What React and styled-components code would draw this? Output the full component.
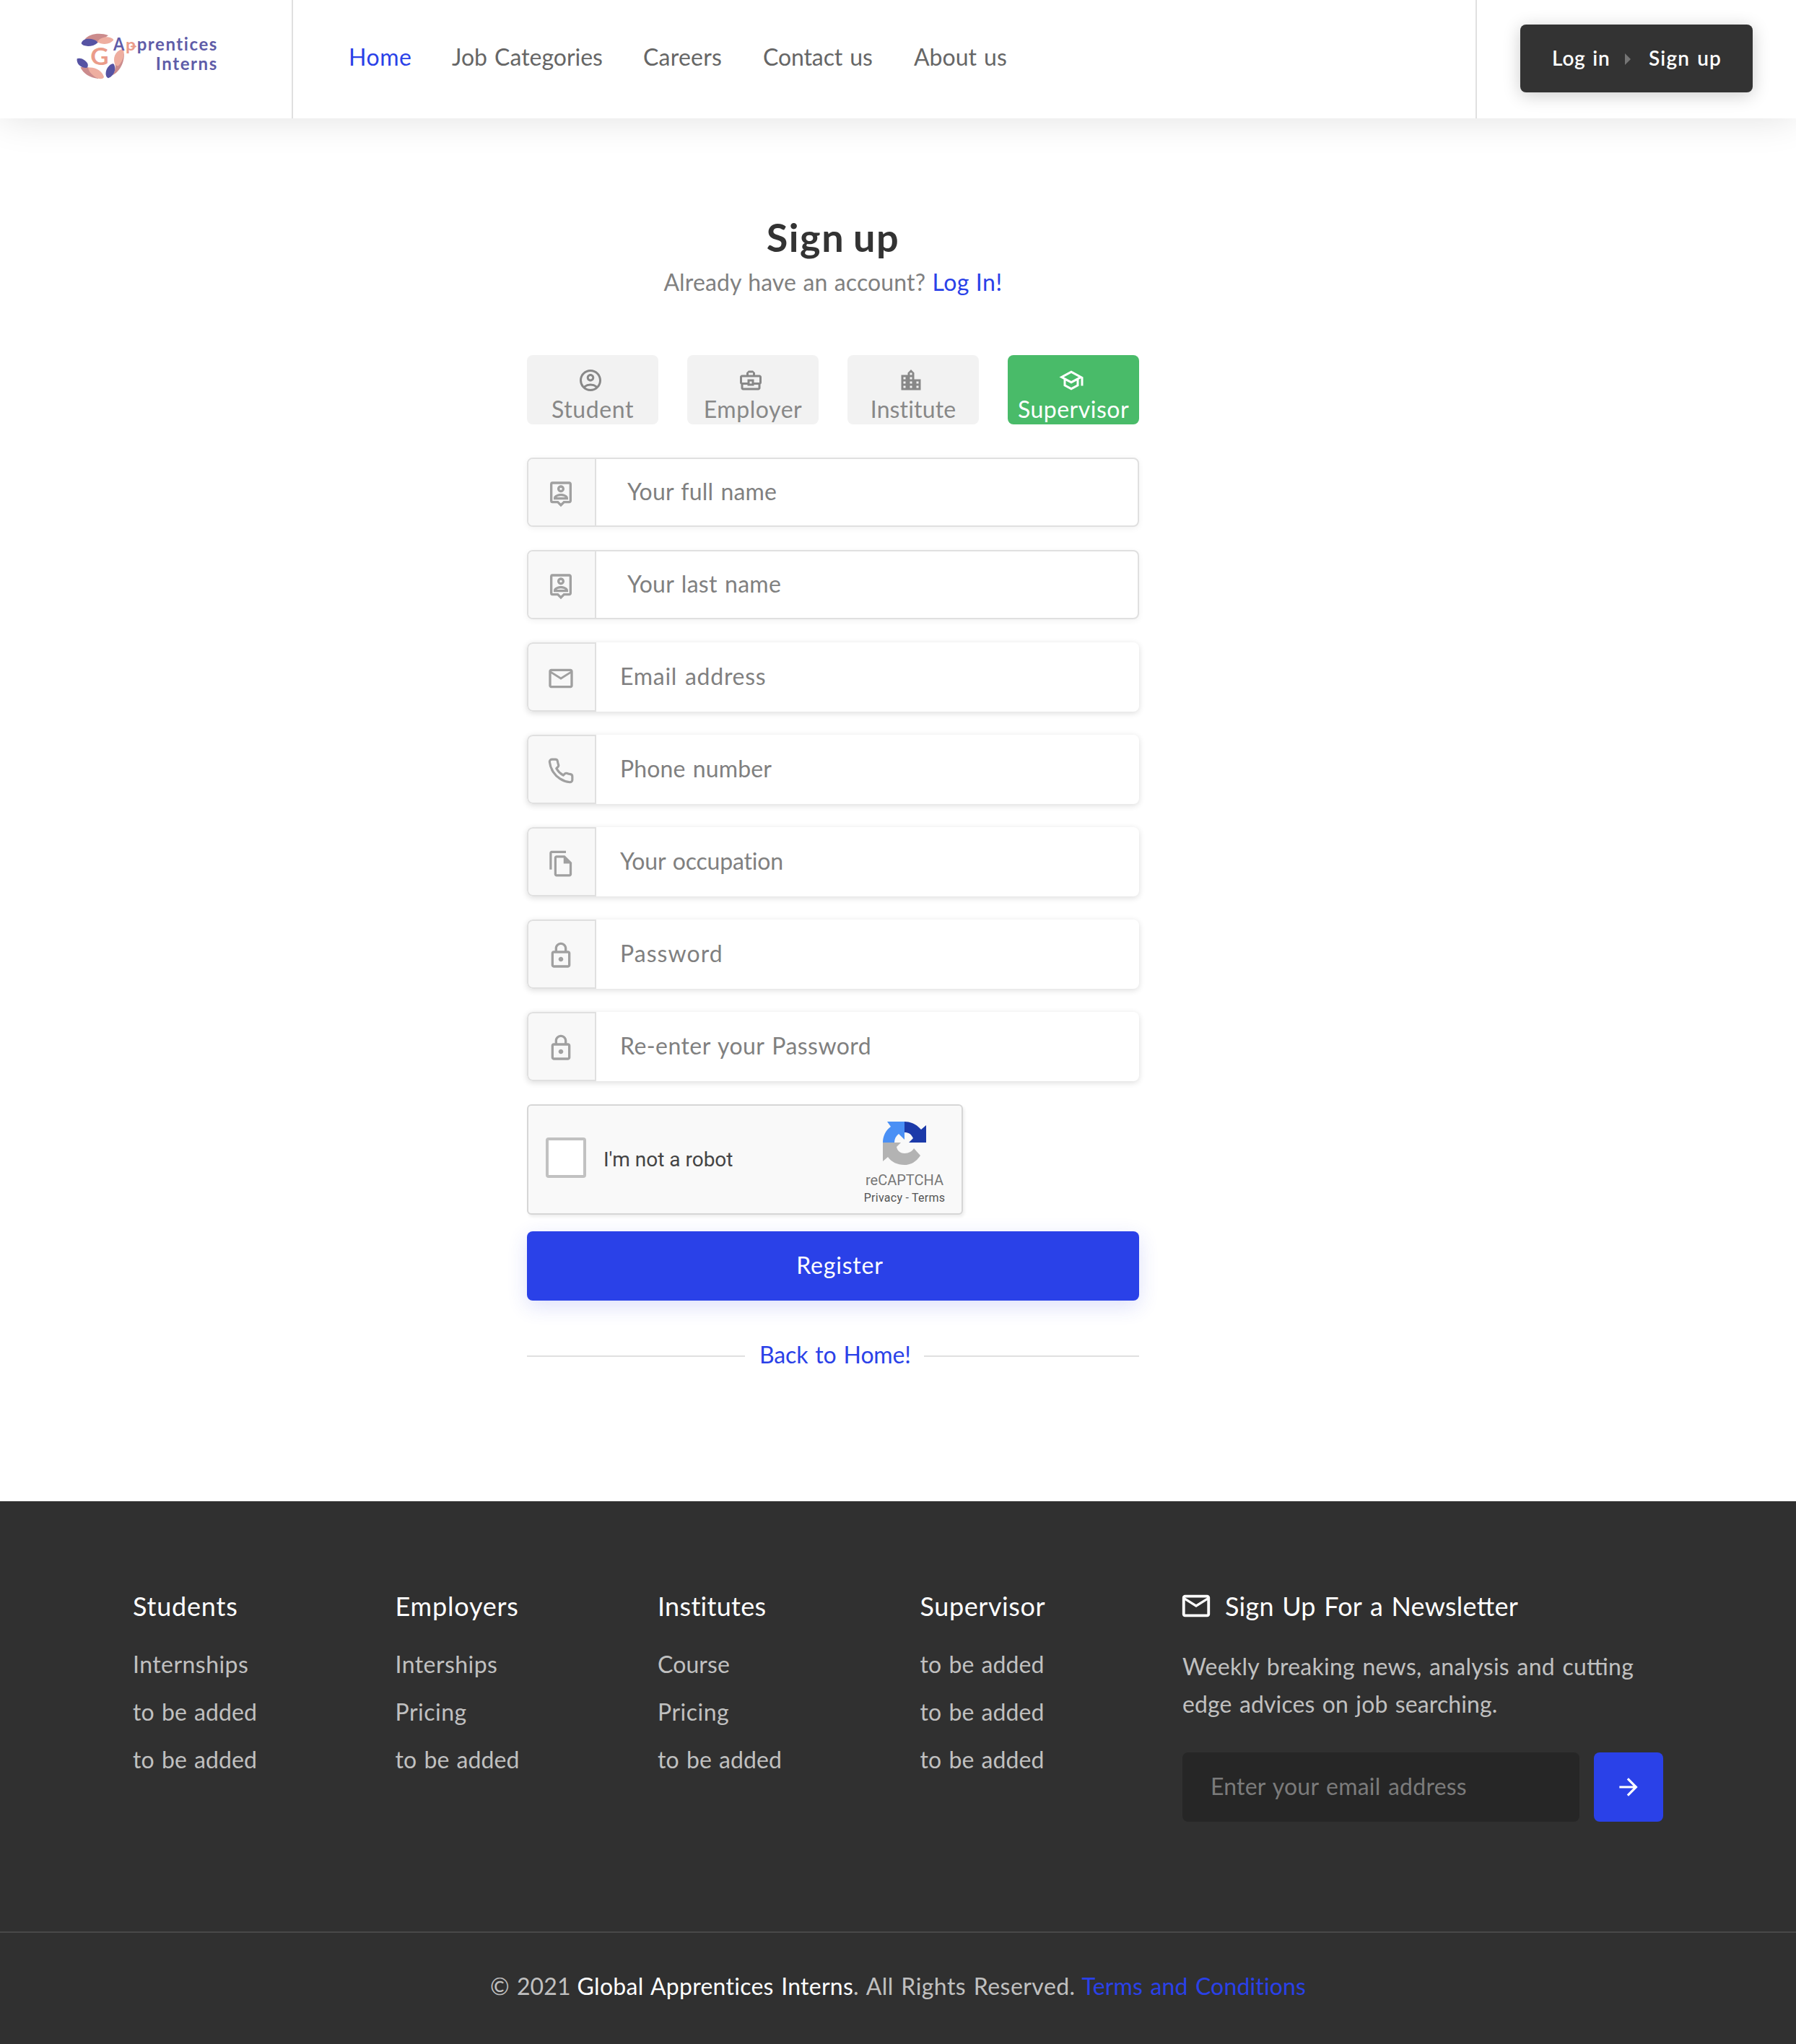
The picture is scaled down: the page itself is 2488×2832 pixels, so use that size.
import React from "react";
import styled, { createGlobalStyle } from "styled-components";
import {
  MdOutlineAccountCircle,
  MdOutlineBusinessCenter,
  MdLocationCity,
  MdOutlineSchool,
  MdOutlinePersonPin,
  MdOutlineEmail,
  MdOutlineLock,
  MdArrowForward,
} from "react-icons/md";
import { FiPhone } from "react-icons/fi";

const blue = "#2a41e8";

const GlobalStyle = createGlobalStyle`
  *, *::before, *::after { box-sizing: border-box; }
  body {
    margin: 0;
    background: #fff;
    color: #808080;
    font: 400 32px/52px "Lato", sans-serif;
    word-spacing: 2px;
  }
  a { color: inherit; text-decoration: none; }
  svg { display: block; flex: none; }
`;

const Page = styled.div`
  width: 2488px;
  height: 2832px;
  display: flex;
  flex-direction: column;
`;

/* Inline run of text with its own tracking */
const Text = styled.span`
  letter-spacing: ${(p) => p.$ls || 0}px;
  word-spacing: ${(p) => p.$ws ?? 2}px;
  font-feature-settings: ${(p) => (p.$lig ? '"liga" 1' : '"liga" 0')};
  color: ${(p) => p.$color || "inherit"};
  white-space: pre;
`;

/* Header */
const Header = styled.header`
  display: flex;
  height: 164px;
  background: #fff;
  box-shadow: 0 0 50px rgba(0, 0, 0, 0.12);
`;

const LogoArea = styled.div`
  width: 406px;
  border-right: 2px solid #e0e0e0;
  padding: 30px 0 0 90px;
`;

const Nav = styled.nav`
  flex: 1;
  display: flex;
  align-items: center;
  padding: 0 0 7px 76px;
`;

const NavLink = styled.a`
  width: ${(p) => p.$w}px;
  padding-left: ${(p) => p.$indent || 0}px;
  color: ${(p) => (p.$active ? blue : "#666")};
`;

const AuthArea = styled.div`
  width: 444px;
  border-left: 2px solid #e0e0e0;
  padding: 34px 0 0 60px;
`;

const AuthButton = styled.div`
  display: flex;
  align-items: center;
  width: 322px;
  height: 94px;
  padding: 0 0 3px 44px;
  border-radius: 8px;
  background: #333;
  color: #fff;
  font-size: 28px;
  font-weight: 600;
  box-shadow: 0 4px 24px rgba(0, 0, 0, 0.2);
`;

const AuthLink = styled.a`
  width: ${(p) => p.$w}px;
`;

const Caret = styled.span`
  margin: 4px 25px 0 0;
  border-left: 8px solid #757575;
  border-top: 8px solid transparent;
  border-bottom: 8px solid transparent;
`;

/* Sign-up form */
const Main = styled.main`
  flex: none;
  height: 1916px;
  padding: 133px 0 0 730px;
`;

const Form = styled.form`
  width: 848px;
  display: flex;
  flex-direction: column;
`;

const Title = styled.h1`
  margin: 0 0 4px;
  text-align: center;
  font-size: 54px;
  line-height: 64px;
  font-weight: 700;
  color: #333;
`;

const Subtitle = styled.p`
  margin: 0 0 75px;
  text-align: center;
`;

const RoleRow = styled.div`
  display: flex;
  gap: 40px;
  margin-bottom: 46px;
`;

const Role = styled.button`
  width: 182px;
  height: 96px;
  border: 0;
  padding: 17px 0 0;
  border-radius: 8px;
  display: flex;
  flex-direction: column;
  align-items: center;
  font: inherit;
  line-height: 44px;
  background: ${(p) => (p.$active ? "#49bb69" : "#f2f2f2")};
  color: ${(p) => (p.$active ? "#fff" : "#888")};
  svg { width: 36px; height: 36px; margin-right: 6px; }
`;

const Fields = styled.div`
  display: flex;
  flex-direction: column;
  gap: 32px;
`;

const Field = styled.label`
  display: flex;
  height: 96px;
  border-radius: 8px;
  background: #fff;
  overflow: hidden;
  border: ${(p) => (p.$outlined ? "2px solid #e0e0e0" : "0")};
  box-shadow: ${(p) =>
    p.$outlined ? "0 2px 8px rgba(0,0,0,0.06)" : "0 2px 8px rgba(0,0,0,0.14)"};
`;

const FieldIcon = styled.span`
  flex: none;
  width: ${(p) => (p.$outlined ? 94 : 96)}px;
  display: flex;
  align-items: center;
  justify-content: center;
  padding: 4px ${(p) => (p.$outlined ? 2 : 2)}px 0 0;
  background: #f8f8f8;
  color: #a0a0a0;
  border: 2px solid #e0e0e0;
  border-width: ${(p) => (p.$outlined ? "0 2px 0 0" : "2px")};
  border-radius: ${(p) => (p.$outlined ? "0" : "8px 0 0 8px")};
`;

const FieldInput = styled.input`
  flex: 1;
  min-width: 0;
  border: 0;
  outline: 0;
  background: transparent;
  padding: 0 0 3px ${(p) => p.$indent}px;
  font: inherit;
  word-spacing: 2px;
  letter-spacing: ${(p) => p.$ls}px;
  &::placeholder { color: ${(p) => p.$tint || "#808080"}; opacity: 1; }
`;

const Captcha = styled.div`
  width: 604px;
  height: 153px;
  margin: 32px 0 23px;
  display: flex;
  align-items: center;
  padding: 0 21px 0 24px;
  background: #f9f9f9;
  border: 2px solid #d6d6d6;
  border-radius: 6px;
  box-shadow: 2px 3px 4px rgba(0, 0, 0, 0.07);
  font-family: "Roboto", sans-serif;
  word-spacing: 0;
`;

const CheckBox = styled.span`
  width: 56px;
  height: 56px;
  margin: 0 24px 5px 0;
  border: 4px solid #c1c1c1;
  border-radius: 4px;
  background: #fff;
`;

const CaptchaLabel = styled.span`
  flex: 1;
  font-size: 28px;
  color: #444;
`;

const CaptchaBrand = styled.div`
  width: 116px;
  display: flex;
  flex-direction: column;
  align-items: center;
  padding-top: 13px;
`;

const BrandName = styled.span`
  margin-top: 8px;
  font-size: 20px;
  line-height: 24px;
  color: #777;
`;

const BrandLinks = styled.span`
  font-size: 16px;
  line-height: 26px;
  letter-spacing: 0.25px;
  color: #555;
`;

const Register = styled.button`
  height: 96px;
  border: 0;
  border-radius: 8px;
  padding: 0 0 3px 19px;
  background: ${blue};
  color: #fff;
  font: inherit;
  box-shadow: 0 8px 28px rgba(42, 65, 232, 0.16);
`;

const BackRow = styled.div`
  display: flex;
  align-items: center;
  height: 56px;
  margin-top: 49px;
`;

const Rule = styled.span`
  width: ${(p) => p.$w}px;
  height: 2px;
  background: #e0e0e0;
`;

const BackLink = styled.a`
  flex: 1;
  padding: 0 0 5px 20px;
  color: ${blue};
`;

/* Footer */
const Footer = styled.footer`
  flex: 1;
  display: flex;
  flex-direction: column;
  background: #303030;
  color: #c0c0c0;
`;

const FooterTop = styled.div`
  height: 596px;
  display: grid;
  grid-template-columns: repeat(4, 363.5px) 1fr;
  padding: 121px 184px 0 184px;
`;

const FooterTitle = styled.h3`
  display: flex;
  align-items: center;
  margin: 0 0 ${(p) => p.$gap || 24}px;
  height: 48px;
  font-size: 36px;
  line-height: 48px;
  font-weight: 400;
  color: #fff;
  svg { width: 46px; height: 46px; margin: 0 17px 1px -4px; }
`;

const FooterLink = styled.a`
  display: block;
  line-height: 66px;
`;

const Newsletter = styled.div`
`;

const Blurb = styled.p`
  margin: 0 0 41px;
  display: flex;
  flex-direction: column;
`;

const Subscribe = styled.div`
  display: flex;
  gap: 20px;
  height: 96px;
`;

const EmailBox = styled.label`
  width: 550px;
  display: flex;
  border-radius: 8px;
  background: #262626;
`;

const SendButton = styled.button`
  width: 96px;
  border: 0;
  border-radius: 8px;
  background: ${blue};
  color: #fff;
  display: flex;
  align-items: center;
  justify-content: center;
`;

const FooterBottom = styled.div`
  flex: 1;
  display: flex;
  align-items: center;
  justify-content: center;
  gap: 9px;
  padding-bottom: 6px;
  border-top: 2px solid #484848;
`;

const Logo = () => (
  <svg width="230" height="90" viewBox="0 0 690 270">
    <g fill="#cb8b8c">
      <path d="M82 74C100 50 145 44 180 57C162 68 152 88 134 88C118 92 108 78 82 74Z" />
      <path d="M64 190C92 184 118 196 128 212C136 222 140 230 138 237C104 234 76 216 64 190Z" />
      <path d="M206 164C225 160 240 146 245 130C249 170 226 210 197 223C212 202 211 180 206 164Z" />
    </g>
    <g fill="#eeaea0">
      <path d="M134 84C150 60 188 58 202 75C190 95 156 98 134 84Z" />
      <path d="M96 191C126 187 156 206 162 230C156 243 134 238 118 224C106 214 98 204 96 191Z" />
      <path d="M205 168C199 142 218 115 243 114C248 136 243 162 222 184C211 184 207 178 205 168Z" />
    </g>
    <g fill="#5653a3">
      <path d="M68 91C72 70 100 69 118 74C130 78 138 84 134 89C118 105 76 106 68 91Z" />
      <path d="M50 154C66 148 86 160 94 174C98 186 93 194 85 192C64 190 47 175 50 154Z" />
      <path d="M204 178C213 196 207 224 180 235C165 230 166 200 184 183C192 176 201 172 204 178Z" />
    </g>
    <g fontFamily="Lato, sans-serif" fontWeight="700" wordSpacing="0">
      <text x="106" y="179" fontSize="96" fill="#eb9c8a" textLength="76" lengthAdjust="spacingAndGlyphs">G</text>
      <g fill="#5f5ca8" fontSize="72" style={{ fontFeatureSettings: '"liga" 0' }}>
        <text x="201" y="121" textLength="46" lengthAdjust="spacingAndGlyphs">A</text>
        <text x="252" y="119" fontSize="66" fill="#eb9c8a" textLength="42" lengthAdjust="spacingAndGlyphs">p</text>
        <text x="299" y="121" textLength="332" lengthAdjust="spacing">prentices</text>
        <text x="377" y="202" textLength="254" lengthAdjust="spacing">Interns</text>
      </g>
      <path d="M276 103H293" stroke="#eb9c8a" strokeWidth="7" strokeLinecap="round" />
    </g>
  </svg>
);

const CopyIcon = () => (
  <svg width="39" height="39" viewBox="0 0 24 24" fill="currentColor">
    <path d="M16 1H4c-1.1 0-2 .9-2 2v14h2V3h12V1z" />
    <path
      fillRule="evenodd"
      d="M15 5l6 6v10c0 1.1-.9 2-2 2H7.99C6.89 23 6 22.1 6 21l.01-14c0-1.1.89-2 1.99-2h7zM8 7v14h11v-9h-5V7H8z"
    />
  </svg>
);

const CaptchaLogo = () => (
  <svg width="60" height="62" viewBox="0 0 60 62">
    <path fill="#4a90f5" d="M6 1H30V26L22 18C18 21 16 25 16 30H0C0 21 4 13 11 8Z" />
    <path fill="#1c3aa9" d="M30 1C40 1 48 6 53 12L60 6V30H36L42 24C39 18 36 16 30 16Z" />
    <path fill="#b3b3b3" d="M0 30H25L19 36C20 42 25 45 30 45C36 45 41 42 43 38L52 48C46 57 38 61 30 61C20 61 12 57 7 50L0 56Z" />
  </svg>
);

const navItems = [
  { label: "Home", ls: 0.53, w: 144, indent: 1, active: true },
  { label: "Job Categories", ls: -0.02, w: 265 },
  { label: "Careers", ls: 0.23, w: 166 },
  { label: "Contact us", ls: -0.11, w: 209 },
  { label: "About us", ls: -0.01, w: 150 },
];

const roles = [
  { label: "Student", ls: 0.6, Icon: MdOutlineAccountCircle },
  { label: "Employer", ls: 0.58, Icon: MdOutlineBusinessCenter },
  { label: "Institute", ls: 0.14, Icon: MdLocationCity },
  { label: "Supervisor", ls: 0.49, Icon: MdOutlineSchool, active: true },
];

const fields = [
  { label: "Your full name", ls: 0.15, indent: 43, outlined: true, icon: <MdOutlinePersonPin size={40} /> },
  { label: "Your last name", ls: 0.25, indent: 43, outlined: true, icon: <MdOutlinePersonPin size={40} /> },
  { label: "Email address", ls: 0.72, indent: 33, icon: <MdOutlineEmail size={40} /> },
  { label: "Phone number", ls: 0.12, indent: 33, icon: <FiPhone size={38} /> },
  { label: "Your occupation", ls: -0.18, indent: 33, icon: <CopyIcon /> },
  { label: "Password", ls: 1.05, indent: 33, type: "password", icon: <MdOutlineLock size={40} /> },
  { label: "Re-enter your Password", ls: 0.44, indent: 33, type: "password", icon: <MdOutlineLock size={40} /> },
];

const tba = ["to be added", 0.06];
const columns = [
  { title: "Students", ls: 0.8, links: [["Internships", 0.45], tba, tba] },
  { title: "Employers", ls: 0.8, links: [["Interships", 0.45], ["Pricing", 0.49], tba] },
  { title: "Institutes", ls: 0.3, links: [["Course", 0.11], ["Pricing", 0.49], tba] },
  { title: "Supervisor", ls: 0.58, links: [tba, tba, tba] },
];

export default function App() {
  return (
    <Page>
      <GlobalStyle />
      <Header>
        <LogoArea>
          <Logo />
        </LogoArea>
        <Nav>
          {navItems.map((n) => (
            <NavLink key={n.label} href="#" $w={n.w} $indent={n.indent} $active={n.active}>
              <Text $ls={n.ls}>{n.label}</Text>
            </NavLink>
          ))}
        </Nav>
        <AuthArea>
          <AuthButton>
            <AuthLink href="#" $w={101}>
              <Text $ls={0.79}>Log in</Text>
            </AuthLink>
            <Caret />
            <AuthLink href="#" $w={110}>
              <Text $ls={1.14}>Sign up</Text>
            </AuthLink>
          </AuthButton>
        </AuthArea>
      </Header>

      <Main>
        <Form>
          <Title>
            <Text $ls={1.6} $ws={-3}>Sign up</Text>
          </Title>
          <Subtitle>
            <Text $ls={0.13} $ws={1}>Already have an account? </Text>
            <Text as="a" href="#" $ls={0.55} $ws={0} $color={blue}>Log In!</Text>
          </Subtitle>
          <RoleRow>
            {roles.map(({ label, ls, Icon, active }) => (
              <Role key={label} type="button" $active={active}>
                <Icon />
                <Text $ls={ls}>{label}</Text>
              </Role>
            ))}
          </RoleRow>
          <Fields>
            {fields.map((f) => (
              <Field key={f.label} $outlined={f.outlined}>
                <FieldIcon $outlined={f.outlined}>{f.icon}</FieldIcon>
                <FieldInput type={f.type || "text"} placeholder={f.label} $ls={f.ls} $indent={f.indent} />
              </Field>
            ))}
          </Fields>
          <Captcha>
            <CheckBox />
            <CaptchaLabel>I'm not a robot</CaptchaLabel>
            <CaptchaBrand>
              <CaptchaLogo />
              <BrandName>reCAPTCHA</BrandName>
              <BrandLinks>Privacy - Terms</BrandLinks>
            </CaptchaBrand>
          </Captcha>
          <Register type="button">
            <Text $ls={0.8}>Register</Text>
          </Register>
          <BackRow>
            <Rule $w={302} />
            <BackLink href="#">
              <Text $ls={-0.15}>Back to Home!</Text>
            </BackLink>
            <Rule $w={298} />
          </BackRow>
        </Form>
      </Main>

      <Footer>
        <FooterTop>
          {columns.map((c) => (
            <div key={c.title}>
              <FooterTitle>
                <Text $ls={c.ls}>{c.title}</Text>
              </FooterTitle>
              {c.links.map(([label, ls], i) => (
                <FooterLink key={i} href="#">
                  <Text $ls={ls}>{label}</Text>
                </FooterLink>
              ))}
            </div>
          ))}
          <Newsletter>
            <FooterTitle $gap={34}>
              <MdOutlineEmail />
              <Text $ls={0.23} $lig>Sign Up For a Newsletter</Text>
            </FooterTitle>
            <Blurb>
              <Text $ls={0.27} $lig>Weekly breaking news, analysis and cutting</Text>
              <Text $ls={0.12}>edge advices on job searching.</Text>
            </Blurb>
            <Subscribe>
              <EmailBox>
                <FieldInput placeholder="Enter your email address" $ls={0.23} $indent={39} $tint="#7b7b7b" />
              </EmailBox>
              <SendButton type="button">
                <MdArrowForward size={38} />
              </SendButton>
            </Subscribe>
          </Newsletter>
        </FooterTop>
        <FooterBottom>
          <Text $ls={0.1}>© 2021</Text>
          <span>
            <Text $ls={0.27} $color="#fff">Global Apprentices Interns</Text>
            <Text $ls={0.45}>. All Rights Reserved.</Text>
          </span>
          <Text as="a" href="#" $ls={0.15} $color={blue}>Terms and Conditions</Text>
        </FooterBottom>
      </Footer>
    </Page>
  );
}
